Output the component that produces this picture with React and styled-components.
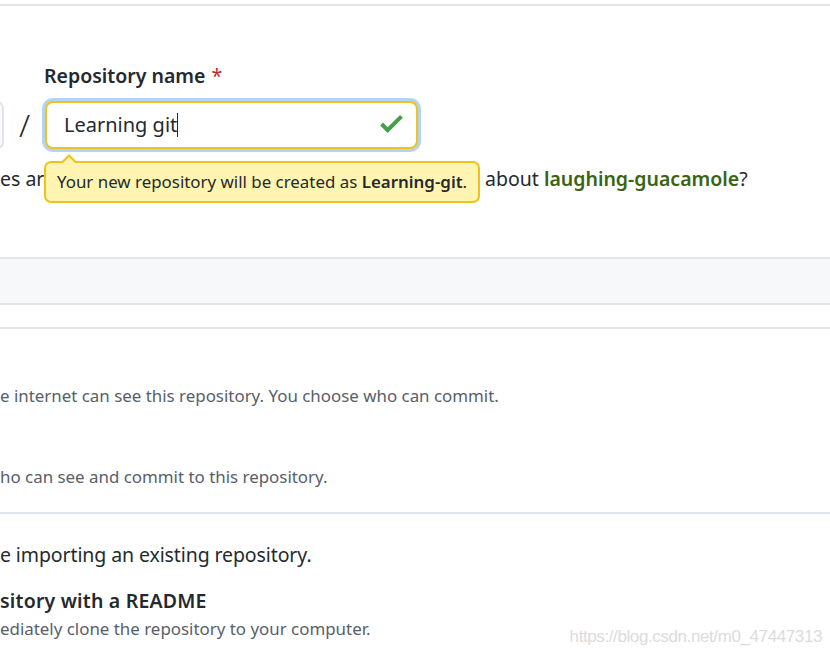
import React from "react";
import styled, { createGlobalStyle } from "styled-components";

const Global = createGlobalStyle`
  html, body { margin: 0; padding: 0; background: #fff; }
  body { font-family: "Noto Sans", "Open Sans", sans-serif; color: #24292e; }
`;

const Page = styled.div`
  width: 830px;
  height: 656px;
  overflow: hidden;
  position: relative;
  padding-top: 4px;
  box-sizing: border-box;
`;

const Rule = styled.div`
  height: 2px;
  background: #e1e4e8;
  margin-top: ${(p) => p.$top || 0}px;
`;

const NameBlock = styled.div`
  padding-top: 58px;
`;

const Label = styled.div`
  margin-left: 44px;
  font-size: 19.5px;
  font-weight: 600;
  line-height: 24px;
  color: #24292e;
  span { color: #cb2431; margin-left: 6px; font-weight: 400; }
`;

const InputRow = styled.div`
  display: flex;
  align-items: center;
  margin-top: 10px;
  height: 54px;
`;

const OwnerButton = styled.div`
  width: 120px;
  height: 48px;
  margin-left: -116px;
  border: 2px solid #e1e4e8;
  border-radius: 7px;
  background: #fafbfc;
  box-sizing: border-box;
`;

const Slash = styled.div`
  font-size: 32px;
  line-height: 1;
  width: 41px;
  text-align: center;
  color: #24292e;
  font-weight: 300;
`;

const InputWrap = styled.div`
  position: relative;
`;

const Input = styled.div`
  width: 373px;
  height: 48px;
  box-sizing: border-box;
  border: 2px solid #f1c21b;
  border-radius: 8px;
  box-shadow: 0 0 0 3px #b5d3f3;
  display: flex;
  align-items: center;
  justify-content: space-between;
  padding: 0 13px 2px 17px;
  font-size: 20px;
  color: #24292e;
  background: #fff;
`;

const Caret = styled.span`
  display: inline-block;
  width: 1px;
  height: 24px;
  background: #24292e;
  vertical-align: -5px;
`;

const Tooltip = styled.div`
  position: absolute;
  left: -1px;
  top: 60px;
  white-space: nowrap;
  background: #fff5b1;
  border: 2px solid #f2c21b;
  border-radius: 7px;
  padding: 8px 11px 9px 11px;
  font-size: 16.9px;
  line-height: 21px;
  color: #24292e;
  z-index: 2;
  b { font-weight: 600; }
  &::before {
    content: "";
    position: absolute;
    left: 15px;
    top: -9px;
    width: 0; height: 0;
    border-left: 8px solid transparent;
    border-right: 8px solid transparent;
    border-bottom: 8px solid #f2c21b;
  }
  &::after {
    content: "";
    position: absolute;
    left: 17px;
    top: -6px;
    width: 0; height: 0;
    border-left: 6px solid transparent;
    border-right: 6px solid transparent;
    border-bottom: 6px solid #fff5b1;
  }
`;

const Hint = styled.div`
  display: flex;
  margin-top: 14px;
  font-size: 19.5px;
  line-height: 26px;
  white-space: nowrap;
  color: #24292e;
`;

const Clipped = styled.span`
  display: inline-block;
  width: 44px;
  margin-right: 441px;
  overflow: hidden;
`;

const Suggest = styled.span`
  color: #3a6314;
  font-weight: 600;
`;

const Band = styled.div`
  margin-top: 65px;
  height: 44px;
  background: #f6f8fa;
  border-top: 2px solid #e1e4e8;
  border-bottom: 2px solid #e1e4e8;
`;

const Visibility = styled.div`
  padding-top: 56px;
`;

const Desc = styled.div`
  font-size: 16.9px;
  line-height: 22px;
  color: #586069;
  white-space: nowrap;
  margin-top: ${(p) => p.$top || 0}px;
`;

const Init = styled.div`
  padding-top: 28px;
`;

const Lead = styled.div`
  font-size: 19.5px;
  line-height: 26px;
  color: #24292e;
  white-space: nowrap;
  letter-spacing: -0.1px;
`;

const CheckTitle = styled.div`
  margin-top: 20px;
  margin-bottom: 4px;
  font-size: 19.5px;
  font-weight: 600;
  line-height: 26px;
  white-space: nowrap;
  letter-spacing: 0.2px;
`;

const Watermark = styled.div`
  position: absolute;
  right: 8px;
  bottom: 9px;
  font-family: "Liberation Sans", Arial, sans-serif;
  font-size: 17px;
  color: #dcdcdc;
  letter-spacing: -0.4px;
`;

const Check = () => (
  <svg width="23" height="18" viewBox="0 3.5 12 9.5" fill="#43a047">
    <path d="M12 5l-8 8-4-4 1.5-1.5L4 10l6.5-6.5L12 5z" />
  </svg>
);

export default function App() {
  return (
    <Page>
      <Global />
      <Rule />
      <NameBlock>
        <Label>
          Repository name<span>*</span>
        </Label>
        <InputRow>
          <OwnerButton />
          <Slash>/</Slash>
          <InputWrap>
            <Input>
              <span>
                Learning git<Caret />
              </span>
              <Check />
            </Input>
            <Tooltip>
              Your new repository will be created as <b>Learning-git</b>.
            </Tooltip>
          </InputWrap>
        </InputRow>
        <Hint>
          <Clipped>es are</Clipped>
          about&nbsp;<Suggest>laughing-guacamole</Suggest>?
        </Hint>
      </NameBlock>
      <Band />
      <Rule $top={22} />
      <Visibility>
        <Desc>e internet can see this repository. You choose who can commit.</Desc>
        <Desc $top={59}>ho can see and commit to this repository.</Desc>
      </Visibility>
      <Rule $top={24} />
      <Init>
        <Lead>e importing an existing repository.</Lead>
        <CheckTitle>sitory with a README</CheckTitle>
        <Desc>ediately clone the repository to your computer.</Desc>
      </Init>
      <Watermark>https://blog.csdn.net/m0_47447313</Watermark>
    </Page>
  );
}
